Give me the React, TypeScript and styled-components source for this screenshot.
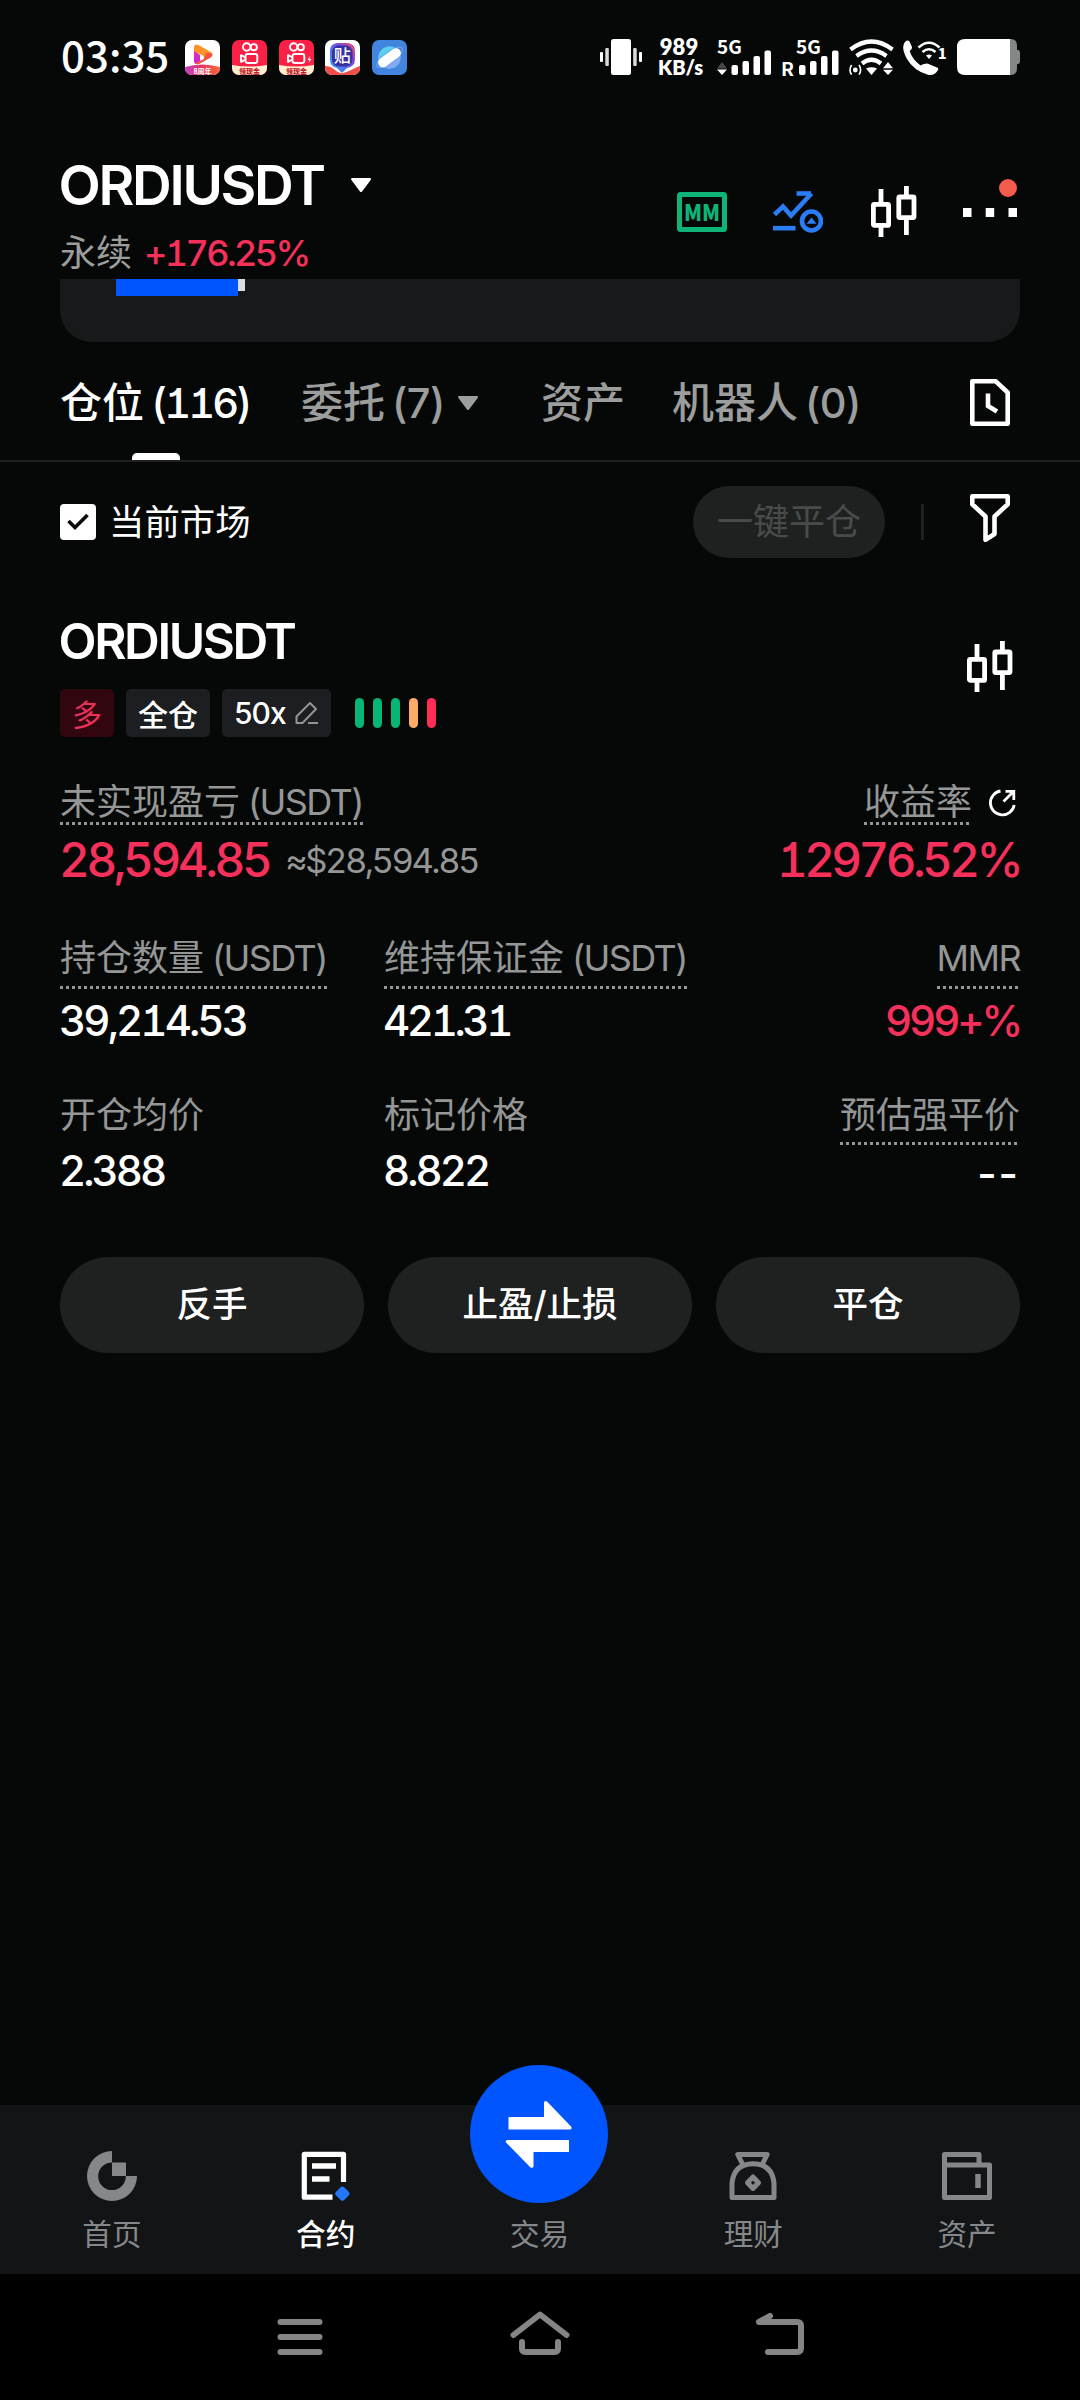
import React from "react";
import styled, { createGlobalStyle } from "styled-components";

const C = {
  bg: "#060807",
  panel: "#18191a",
  pill: "#1f2120",
  line: "#1f2020",
  white: "#ffffff",
  grey: "#959797",
  tab: "#9c9e9e",
  nav: "#131415",
  navText: "#85888a",
  red: "#f5305a",
  green: "#06b676",
  blue: "#0055ff",
};

const GlobalStyle = createGlobalStyle`
  * { box-sizing: border-box; }
  body { margin: 0; background: ${C.bg}; }
  svg { display: block; flex: none; }
`;

const Screen = styled.div`
  width: 1080px;
  height: 2400px;
  display: flex;
  flex-direction: column;
  overflow: hidden;
  background: ${C.bg};
  color: ${C.white};
  font-family: Inter, "Noto Sans CJK SC", sans-serif;
  font-feature-settings: "cv01";
  white-space: nowrap;
`;

const Latin = styled.span<{ $track?: number; $tabular?: boolean }>`
  letter-spacing: ${(p) => p.$track ?? -1}px;
  font-feature-settings: ${(p) => (p.$tabular ? '"cv01", "tnum"' : '"cv01"')};
`;

/* ---------- status bar ---------- */

const StatusBar = styled.header`
  height: 114px;
  padding: 0 60px 0 61px;
  display: flex;
  align-items: center;
`;

const Clock = styled.div`
  width: 124px;
  padding-bottom: 6px;
  font: 500 42px/44px "Noto Sans CJK SC", sans-serif;
`;

const AppIcons = styled.div`
  display: flex;
  gap: 11.8px;
`;

const StatusRight = styled.div`
  margin-left: auto;
  height: 36px;
  display: flex;
  align-items: stretch;
`;

const NetSpeed = styled.div`
  width: 42px;
  margin: 0 17px 0 16px;
  display: flex;
  flex-direction: column;
  text-align: center;
  font: 800 22px/16px Lato, sans-serif;
  & > small {
    font-size: 20px;
    line-height: 25px;
  }
`;

const Signal = styled.div<{ $width: number }>`
  position: relative;
  width: ${(p) => p.$width}px;
`;

const SignalLabel = styled.span<{ $x: number; $y: number; $size: number }>`
  position: absolute;
  left: ${(p) => p.$x}px;
  top: ${(p) => p.$y}px;
  font: 700 ${(p) => p.$size}px/18px "Noto Sans CJK SC", sans-serif;
`;

const StatusGap = styled.div<{ $w: number }>`
  width: ${(p) => p.$w}px;
`;

/* ---------- header ---------- */

const Header = styled.div`
  height: 165px;
  padding: 41px 60px 0;
  display: flex;
  justify-content: space-between;
`;

const PairName = styled.h1<{ $size: number; $track: number }>`
  margin: 0 0 0 -1.5px;
  font-size: ${(p) => p.$size}px;
  line-height: 60px;
  font-weight: 600;
  letter-spacing: ${(p) => p.$track}px;
`;

const PairRow = styled.div`
  display: flex;
  align-items: center;
  gap: 27px;
`;

const PairSub = styled.div`
  margin-top: 16px;
  display: flex;
  gap: 12px;
  font-size: 36px;
  line-height: 44px;
  color: ${C.tab};
`;

const Change = styled(Latin)`
  color: ${C.red};
  font-weight: 500;
`;

const HeaderIcons = styled.div`
  height: 60px;
  margin-top: 27px;
  display: flex;
  gap: 36px;
`;

const IconBox = styled.div`
  position: relative;
  width: 60px;
  height: 60px;
  display: flex;
  align-items: center;
  justify-content: center;
`;

const Badge = styled.i`
  position: absolute;
  right: 3px;
  top: -3px;
  width: 18px;
  height: 18px;
  border-radius: 50%;
  background: #f55b4c;
`;

const ScrolledPanel = styled.div`
  height: 63px;
  margin: 0 60px;
  padding-left: 56px;
  display: flex;
  background: ${C.panel};
  border-radius: 0 0 32px 32px;
`;

const SliderFill = styled.div`
  width: 122px;
  height: 17px;
  background: ${C.blue};
`;

const SliderThumb = styled.div`
  width: 7px;
  height: 12px;
  background: #dcdfe2;
`;

/* ---------- tabs ---------- */

const Tabs = styled.nav`
  height: 120px;
  padding: 0 60px;
  display: flex;
  border-bottom: 2px solid ${C.line};
`;

const Tab = styled.div<{ $active?: boolean; $width: number }>`
  position: relative;
  width: ${(p) => p.$width}px;
  padding-top: 36px;
  display: flex;
  font-size: 42px;
  line-height: 50px;
  font-weight: 500;
  color: ${(p) => (p.$active ? C.white : C.tab)};
  &::after {
    content: "";
    display: ${(p) => (p.$active ? "block" : "none")};
    position: absolute;
    left: 71.5px;
    bottom: 0;
    width: 48px;
    height: 7px;
    border-radius: 5px 5px 0 0;
    background: ${C.white};
  }
  & svg {
    margin: 18px 0 0 13px;
  }
`;

const Count = styled(Latin)`
  margin-left: 7px;
  font-size: 41.5px;
`;

const TabIcon = styled(IconBox)`
  margin: 30px 0 0 auto;
`;

/* ---------- toolbar ---------- */

const Toolbar = styled.div`
  height: 120px;
  padding: 0 60px;
  display: flex;
  align-items: center;
`;

const Checkbox = styled.div`
  width: 36px;
  height: 36px;
  margin-right: 13px;
  display: flex;
  align-items: center;
  justify-content: center;
  border-radius: 4px;
  background: ${C.white};
`;

const CheckLabel = styled.span`
  padding-top: 1px;
  font-size: 35.4px;
  line-height: 44px;
`;

const CloseAll = styled.button`
  width: 192px;
  height: 72px;
  margin: 0 36px 0 auto;
  padding: 0;
  border: 0;
  border-radius: 36px;
  background: ${C.pill};
  color: #494b4b;
  font: 400 36px/44px Inter, "Noto Sans CJK SC", sans-serif;
`;

const Divider = styled.i`
  width: 3px;
  height: 36px;
  margin-right: 36px;
  background: ${C.line};
`;

const FilterBox = styled(IconBox)`
  padding-bottom: 9px;
`;

/* ---------- position card ---------- */

const Card = styled.section`
  padding: 29px 60px 0;
`;

const CardHead = styled.div`
  display: flex;
  justify-content: space-between;
  align-items: center;
`;

const CardIcon = styled(IconBox)`
  margin-bottom: 15px;
`;

const Tags = styled.div`
  margin-top: 18px;
  height: 48px;
  display: flex;
  align-items: center;
`;

const Tag = styled.span<{ $long?: boolean }>`
  height: 48px;
  margin-right: 12px;
  padding: 0 12px;
  display: flex;
  align-items: center;
  gap: 9px;
  border-radius: 5px;
  font-size: 30px;
  font-weight: ${(p) => (p.$long ? 400 : 500)};
  background: ${(p) => (p.$long ? "#31060f" : "#1d1e22")};
  color: ${(p) => (p.$long ? "#e8325a" : C.white)};
`;

const RiskBars = styled.div`
  display: flex;
  gap: 9px;
  margin-left: 12px;
`;

const RiskBar = styled.i<{ $color: string }>`
  width: 9px;
  height: 30px;
  border-radius: 4.5px;
  background: ${(p) => p.$color};
`;

const PnlRow = styled.div`
  margin-top: 44px;
  display: flex;
  justify-content: space-between;
`;

const Grid = styled.div`
  margin-top: 52px;
  display: grid;
  grid-template-columns: 324px 324px 1fr;
  row-gap: 48px;
`;

const Metric = styled.div<{ $right?: boolean }>`
  display: flex;
  flex-direction: column;
  align-items: ${(p) => (p.$right ? "flex-end" : "flex-start")};
`;

const Label = styled.div<{ $gap?: number; $plain?: boolean }>`
  display: flex;
  padding-bottom: ${(p) => (p.$plain ? 0 : 2 + (p.$gap ?? 8))}px;
  font-size: 36px;
  line-height: 42px;
  color: ${C.grey};
  background: ${(p) =>
    p.$plain ? "none" : `repeating-linear-gradient(90deg, ${C.grey} 0 3px, transparent 3px 6px) bottom left / 100% 3px no-repeat`};
`;

const LabelRow = styled.div`
  display: flex;
  gap: 16px;
  padding-right: 4px;
`;

const ShareBox = styled.div`
  padding-top: 8px;
`;

const Unit = styled(Latin)`
  margin-left: 8px;
`;

const BigValue = styled.div`
  margin: 10px 0 0 -1px;
  display: flex;
  align-items: center;
  gap: 16px;
  font-size: 47.5px;
  line-height: 50px;
  font-weight: 500;
  color: ${C.red};
`;

const Approx = styled(Latin)`
  font-size: 34.6px;
  font-weight: 400;
  color: ${C.grey};
`;

const Value = styled(Latin)<{ $red?: boolean; $top?: number }>`
  margin: ${(p) => p.$top ?? 7}px 0 0 -1px;
  font-size: 42px;
  line-height: 50px;
  font-weight: 500;
  color: ${(p) => (p.$red ? C.red : C.white)};
`;

const Actions = styled.div`
  margin-top: 58px;
  display: grid;
  grid-template-columns: repeat(3, 1fr);
  gap: 24px;
`;

const Action = styled.button`
  height: 96px;
  padding: 0;
  border: 0;
  border-radius: 48px;
  background: ${C.pill};
  color: ${C.white};
  font: 500 35.5px/44px Inter, "Noto Sans CJK SC", sans-serif;
`;

/* ---------- bottom ---------- */

const BottomNav = styled.nav`
  height: 169px;
  margin-top: auto;
  padding: 0 6px 0 5px;
  display: grid;
  grid-template-columns: repeat(5, 1fr);
  background: ${C.nav};
`;

const NavItem = styled.div<{ $active?: boolean }>`
  position: relative;
  padding-top: 45px;
  display: flex;
  flex-direction: column;
  align-items: center;
  color: ${(p) => (p.$active ? C.white : C.navText)};
`;

const NavIcon = styled.div`
  height: 52px;
  display: flex;
  align-items: center;
`;

const NavLabel = styled.span<{ $active?: boolean }>`
  margin-top: 14px;
  font-size: 29.6px;
  line-height: 36px;
  font-weight: ${(p) => (p.$active ? 500 : 400)};
`;

const TradeButton = styled.div`
  position: absolute;
  top: -40px;
  left: 37.4px;
  width: 138px;
  height: 138px;
  border-radius: 50%;
  background: ${C.blue};
`;

const SystemNav = styled.footer`
  height: 126px;
  padding: 0 270px;
  display: flex;
  justify-content: space-between;
  background: #000;
`;

/* ---------- drawings ---------- */

const Caret = ({ w, h }: { w: number; h: number }) => (
  <svg width={w} height={h} viewBox="0 0 20 14" fill="currentColor">
    <path d="M1.500 0h17.2c1.2 0 1.700 1 1 1.900L11.200 13.300a1.500 1.500 0 0 1-2.400 0L.4 1.900C-.4 1 .2 0 1.500 0Z" />
  </svg>
);

const Candles = () => (
  <svg width="46" height="52" viewBox="0 0 46 52" fill="none" stroke="#fff" strokeWidth="4.800">
    <rect x="2.400" y="18.400" width="15.200" height="21" rx="1" />
    <path d="M10 3v14M10 40v11" />
    <rect x="27.800" y="11" width="15.200" height="20.600" rx="1" />
    <path d="M35.400 0v10M35.400 33v16" />
  </svg>
);

const VideoApp = () => (
  <svg width="35" height="35" viewBox="0 0 35 35">
    <defs>
      <clipPath id="va"><rect width="35" height="35" rx="7" /></clipPath>
      <linearGradient id="vg" x1="0" y1="1" x2="0" y2="0">
        <stop offset="0" stopColor="#c31bf0" /><stop offset="1" stopColor="#f0349a" />
      </linearGradient>
      <linearGradient id="vb" x1="0" x2="1">
        <stop offset="0" stopColor="#c440c8" /><stop offset=".5" stopColor="#e8365c" /><stop offset="1" stopColor="#ff6a3a" />
      </linearGradient>
    </defs>
    <g clipPath="url(#va)">
      <rect width="35" height="35" fill="#fff" />
      <path d="M9 10l6 5v8l-3 1q-3 0-3-3Z" fill="url(#vg)" />
      <path d="M9 8q0-5 4.500-3L25 11.500q4 3 0 6L17 21q4-4 0-6L9 11Z" fill="#ff9426" />
      <path d="M27 13q1.500 3-2 5l-11 6q-3 1-4-1l9-4 2-6Z" fill="#f2543f" />
      <path d="M0 27q17-5 35 0v8H0Z" fill="url(#vb)" />
      <text x="17.500" y="33.500" textAnchor="middle" fontSize="7" fontWeight="700" fill="#fff" fontFamily="Noto Sans CJK SC">8周年</text>
    </g>
  </svg>
);

const KuaiApp = ({ id, bolt }: { id: string; bolt?: boolean }) => (
  <svg width="35" height="35" viewBox="0 0 35 35">
    <defs><clipPath id={id}><rect width="35" height="35" rx="7" /></clipPath></defs>
    <g clipPath={`url(#${id})`}>
      <rect width="35" height="35" fill="#fb2146" />
      <path d="M0 25q17 3 35 0v10H0Z" fill="#ffeed0" />
      <g fill="none" stroke="#fff" strokeWidth="1.900">
        <circle cx="14.700" cy="7" r="3.700" />
        <circle cx="21.800" cy="7.200" r="3.100" />
        <rect x="13.500" y="14" width="11.800" height="9" rx="2.200" />
        <path d="M13.500 17.500L9 15.200v6.600l4.500-2.100" strokeLinejoin="round" />
      </g>
      {bolt && <path d="M31 16l-2.500 4h2L29.500 23l3-4h-2Z" fill="#fff" />}
      <text x="17.500" y="33.600" textAnchor="middle" fontSize="7" fontWeight="900" fill="#c4202c" fontFamily="Noto Sans CJK SC">领现金</text>
    </g>
  </svg>
);

const TiebaApp = () => (
  <svg width="35" height="35" viewBox="0 0 35 35">
    <defs>
      <clipPath id="ta"><rect width="35" height="35" rx="7" /></clipPath>
      <linearGradient id="tg" x1="1" y1="0" x2="0" y2="1">
        <stop offset="0" stopColor="#ff4a5f" /><stop offset=".35" stopColor="#7b4be0" /><stop offset="1" stopColor="#2aa7ff" />
      </linearGradient>
    </defs>
    <g clipPath="url(#ta)">
      <rect width="35" height="35" fill="#fff" />
      <path d="M0 26q6 0 10 4t8 3 8-3 9-4v9H0Z" fill="#ee5048" />
      <path d="M12 3h11q7 1 7 8v8q0 8-8 9l-5 5-5-5q-7-1-7-9v-8q0-7 7-8Z" fill="url(#tg)" />
      <rect x="7" y="5.500" width="20.500" height="21" rx="7" fill="#37309e" />
      <text x="17.300" y="22.300" textAnchor="middle" fontSize="17" fontWeight="500" fill="#fff" fontFamily="Noto Sans CJK SC">贴</text>
    </g>
  </svg>
);

const PlanetApp = () => (
  <svg width="35" height="35" viewBox="0 0 35 35">
    <rect width="35" height="35" rx="7" fill="#4285df" />
    <circle cx="17.500" cy="17.700" r="11.200" fill="#82aaf0" />
    <path d="M6.500 19A11.200 11.200 0 0 1 26 10.500Z" fill="#58d0ee" />
    <ellipse cx="17.500" cy="17.500" rx="15.500" ry="5.500" fill="none" stroke="#6fa3ec" strokeWidth="1" transform="rotate(-36 17.500 17.500)" />
    <rect x="4.500" y="13" width="26" height="9.600" rx="4.800" fill="#fff" transform="rotate(-36 17.500 17.800)" />
  </svg>
);

const Vibrate = () => (
  <svg width="42" height="36" viewBox="0 0 42 36" fill="#fff">
    <rect x="11" width="20" height="36" rx="2.500" />
    <rect x="5.300" y="9" width="3.500" height="18" rx="1" opacity=".85" />
    <rect x="33.200" y="9" width="3.500" height="18" rx="1" opacity=".85" />
    <rect x="0" y="13" width="3" height="10" rx="1" />
    <rect x="39" y="13" width="3" height="10" rx="1" />
  </svg>
);

const Bars = ({ x, arrows }: { x: number; arrows?: boolean }) => (
  <svg width="57" height="36" viewBox="0 0 57 36" fill="#fff">
    {arrows && <path d="M0 29.500L5 23l5 6.500Z" fill="#484a4a" />}
    {arrows && <path d="M0 30.500h10L5 36Z" />}
    <rect x={x} y="26" width="6.500" height="10" rx="2" />
    <rect x={x + 11} y="22" width="6.500" height="14" rx="2" />
    <rect x={x + 22} y="17" width="6.500" height="19" rx="2" />
    <rect x={x + 33} y="11.500" width="6.500" height="24.500" rx="2" />
  </svg>
);

const Wifi = () => (
  <svg width="45" height="36" viewBox="0 0 45 36" fill="none" stroke="#fff" strokeWidth="4.200" strokeLinecap="butt">
    <path d="M1.500 10.500Q22.500-5.500 43.500 10.500" />
    <path d="M7.500 17Q22.500 6 37.500 17" />
    <path d="M13 24.500Q22.500 17 32 24.500" />
    <path d="M17 29.500q5.500-2.500 11 0L22.500 36Z" fill="#fff" stroke="none" />
    <path d="M34 29.200L39 23l5 6.200ZM34 30.800h10L39 36Z" fill="#fff" stroke="none" />
    <circle cx="6.300" cy="31" r="2.400" fill="#fff" stroke="none" />
    <path d="M2.600 26q-3.200 5 0 9.600M10 26q3.200 5 0 9.600" strokeWidth="1.600" />
  </svg>
);

const WifiCall = () => (
  <svg width="46" height="36" viewBox="0 0 46 36" fill="none" stroke="#fff">
    <path d="M2 3Q4.500.5 6.500 2.500L9 8q.5 2-2.300 4Q9 20 17.500 26.500 20 25 22.500 24.800q1.500-.5 2.500 0l9.500 4q1.500 1 0 3-3 5-9.500 4Q11 32 4 20-2.500 8 2 3Z" fill="#fff" stroke="none" />
    <path d="M15.500 8.500q10.500-9.500 21 0" strokeWidth="2.600" />
    <path d="M19.500 13q6.500-5.500 13 0" strokeWidth="2.600" />
    <path d="M23 16.500q3-2 6 0L26 20Z" fill="#fff" stroke="none" />
    <text x="35" y="20" fontSize="14" fontWeight="800" fill="#fff" stroke="none" fontFamily="Noto Sans CJK SC">1</text>
  </svg>
);

const Battery = () => (
  <svg width="63" height="36" viewBox="0 0 63 36">
    <path d="M50 0h4q6 0 6 7v4h1q2 0 2 3v8q0 3-2 3h-1v4q0 7-6 7h-4Z" fill="#858686" />
    <path d="M8 0h45v36H8q-8 0-8-8V8q0-8 8-8Z" fill="#fff" />
  </svg>
);

const MarginMode = () => (
  <svg width="50" height="40" viewBox="0 0 50 40">
    <rect x="2.500" y="2.500" width="45" height="35" rx="1" fill="none" stroke="#0fb479" strokeWidth="5" />
    <text x="25" y="28.500" textAnchor="middle" fontSize="23" fontWeight="800" textLength="36" lengthAdjust="spacingAndGlyphs" fill="#0fb479" fontFamily="Noto Sans CJK SC">MM</text>
  </svg>
);

const Trend = () => (
  <svg width="50" height="42" viewBox="0 0 50 42" fill="none" stroke="#2b7df5" strokeWidth="4.600">
    <path d="M1.500 23.500L10 15.500l8 9L38.500 2.500" />
    <path d="M23.500 2.500H38" />
    <path d="M0 37.200h22.500" />
    <circle cx="38.500" cy="30" r="9.500" />
    <path d="M33.500 32.800L38.500 26.500l5 6.300Z" fill="#2b7df5" stroke="none" />
  </svg>
);

const More = () => (
  <svg width="54" height="9" viewBox="0 0 54 9" fill="#fff">
    <rect width="8.500" height="9" /><rect x="22.700" width="8.500" height="9" /><rect x="45.500" width="8.500" height="9" />
  </svg>
);

const History = () => (
  <svg width="40" height="47" viewBox="0 0 40 47" fill="none" stroke="#fff" strokeWidth="4.600" strokeLinejoin="round">
    <path d="M2.300 2.300h23.500L37.700 13.500v31.200H2.300Z" />
    <path d="M18 14.500v12.500l9 5.500" strokeLinejoin="miter" />
  </svg>
);

const Filter = () => (
  <svg width="40" height="48" viewBox="0 0 40 48" fill="none" stroke="#fff" strokeWidth="4.600" strokeLinejoin="round">
    <path d="M2.300 2.300h35.400v8L24.500 22.500v17.500L15.500 45.700V22.500L2.300 10.300Z" />
  </svg>
);

const Pencil = () => (
  <svg width="24" height="24" viewBox="0 0 24 24" fill="none" stroke="#929496" strokeWidth="2">
    <path d="M1.500 22V15.500L15 2l6 6L7.500 22Z" strokeLinejoin="round" /><path d="M13 22h10" />
  </svg>
);

const Share = () => (
  <svg width="28" height="28" viewBox="0 0 28 28" fill="none" stroke="#fff" strokeWidth="2.800">
    <path d="M12.500 2A12 12 0 1 0 26.200 16" />
    <path d="M15.500 12.500L25 3M17.500 2.400h8.300v8.600" />
  </svg>
);

const HomeGlyph = () => (
  <svg width="50" height="50" viewBox="0 0 50 50" fill="#85888a">
    <path d="M25 0v11.500A13.800 13.800 0 1 0 38.800 25H50A25 25 0 1 1 25 0Z" />
    <rect x="25" y="11.500" width="14" height="13.500" />
  </svg>
);

const ContractGlyph = () => (
  <svg width="50" height="50" viewBox="0 0 50 50" fill="none" stroke="#fff" strokeWidth="5.200" strokeLinejoin="round">
    <path d="M42.500 31V3.300H3.300v42.900H31.500" />
    <path d="M11 15h24M11 28h17.500" strokeWidth="5.500" />
    <rect x="35.800" y="37" width="11.400" height="11.400" rx="2.500" fill="#2477f8" stroke="none" transform="rotate(45 41.500 42.500)" />
  </svg>
);

const EarnGlyph = () => (
  <svg width="48" height="50" viewBox="0 0 48 50" fill="none" stroke="#85888a" strokeWidth="5" strokeLinejoin="round">
    <path d="M14 14L8.800 3.500h29.400L33 14" />
    <path d="M3 46.500V32Q5 13 24 12.800 43 13 45 32V46.500Z" />
    <path d="M24 26l5.500 5.700-5.500 5.700-5.500-5.700Z" />
  </svg>
);

const WalletGlyph = () => (
  <svg width="50" height="50" viewBox="0 0 50 50" fill="none" stroke="#85888a" strokeWidth="5" strokeLinejoin="round">
    <path d="M2.500 14h45v32.500h-45ZM2.500 14V3.500h34.500V14" />
    <path d="M36 23v14" strokeWidth="5.500" />
  </svg>
);

const Swap = () => (
  <svg width="138" height="138" viewBox="0 0 138 138" fill="#fff">
    <path d="M38.500 52H74V37.500q.5-2.500 3-1L101.500 62q.5 2-1 2.500h-62Z" />
    <path d="M99 75H37q-2 1-1 2.500L60.500 102.500q2.500 1 3-1V87H99Z" />
  </svg>
);

const SysIcon = ({ d }: { d: string }) => (
  <svg width="60" height="126" viewBox="0 0 60 126" fill="none" stroke="#858585" strokeWidth="6" strokeLinecap="round" strokeLinejoin="round">
    <path d={d} />
  </svg>
);

/* ---------- data ---------- */

const risk = [C.green, C.green, C.green, "#ffab66", "#ff2c58"];
const actions = ["反手", "止盈/止损", "平仓"];

export default function App() {
  return (
    <Screen>
      <GlobalStyle />
      <StatusBar>
        <Clock>03:35</Clock>
        <AppIcons>
          <VideoApp />
          <KuaiApp id="k1" />
          <KuaiApp id="k2" bolt />
          <TiebaApp />
          <PlanetApp />
        </AppIcons>
        <StatusRight>
          <Vibrate />
          <NetSpeed>
            989<small>KB/s</small>
          </NetSpeed>
          <Signal $width={65}>
            <SignalLabel $x={0} $y={-2} $size={19}>5G</SignalLabel>
            <Bars x={14.5} arrows />
          </Signal>
          <Signal $width={67}>
            <SignalLabel $x={14} $y={-2} $size={19}>5G</SignalLabel>
            <SignalLabel $x={-1} $y={20} $size={19}>R</SignalLabel>
            <Bars x={17} />
          </Signal>
          <Wifi />
          <StatusGap $w={9} />
          <WifiCall />
          <StatusGap $w={8} />
          <Battery />
        </StatusRight>
      </StatusBar>

      <Header>
        <div>
          <PairRow>
            <PairName $size={55} $track={-2.3}>ORDIUSDT</PairName>
            <Caret w={20} h={14} />
          </PairRow>
          <PairSub>
            永续<Change $tabular $track={-2.6}>+176.25%</Change>
          </PairSub>
        </div>
        <HeaderIcons>
          <IconBox><MarginMode /></IconBox>
          <IconBox><Trend /></IconBox>
          <IconBox><Candles /></IconBox>
          <IconBox><More /><Badge /></IconBox>
        </HeaderIcons>
      </Header>

      <ScrolledPanel>
        <SliderFill />
        <SliderThumb />
      </ScrolledPanel>

      <Tabs>
        <Tab $active $width={241}>仓位<Count $tabular $track={-2.9}>(116)</Count></Tab>
        <Tab $width={240}>委托<Count $track={-0.5}>(7)</Count><Caret w={20} h={14} /></Tab>
        <Tab $width={131}>资产</Tab>
        <Tab $width={200}>机器人<Count $track={-0.5}>(0)</Count></Tab>
        <TabIcon><History /></TabIcon>
      </Tabs>

      <Toolbar>
        <Checkbox>
          <svg width="22" height="18" viewBox="0 0 22 18" fill="none" stroke="#0b0b0b" strokeWidth="3.600">
            <path d="M1.500 8L8 14.500 20.500 2" />
          </svg>
        </Checkbox>
        <CheckLabel>当前市场</CheckLabel>
        <CloseAll>一键平仓</CloseAll>
        <Divider />
        <FilterBox><Filter /></FilterBox>
      </Toolbar>

      <Card>
        <CardHead>
          <div>
            <PairName $size={49.5} $track={-2.4}>ORDIUSDT</PairName>
            <Tags>
              <Tag $long>多</Tag>
              <Tag>全仓</Tag>
              <Tag><Latin $track={-1}>50x</Latin><Pencil /></Tag>
              <RiskBars>
                {risk.map((c, i) => <RiskBar key={i} $color={c} />)}
              </RiskBars>
            </Tags>
          </div>
          <CardIcon><Candles /></CardIcon>
        </CardHead>

        <PnlRow>
          <Metric>
            <Label $gap={0}>未实现盈亏<Unit $track={-1.6}>(USDT)</Unit></Label>
            <BigValue>
              <Latin $tabular $track={-3.4}>28,594.85</Latin>
              <Approx $tabular $track={-2.5}>≈$28,594.85</Approx>
            </BigValue>
          </Metric>
          <Metric $right>
            <LabelRow>
              <Label $gap={0}>收益率</Label>
              <ShareBox><Share /></ShareBox>
            </LabelRow>
            <BigValue><Latin $tabular $track={-3.6}>12976.52%</Latin></BigValue>
          </Metric>
        </PnlRow>

        <Grid>
          <Metric>
            <Label>持仓数量<Unit $track={-1.6}>(USDT)</Unit></Label>
            <Value $tabular $track={-2.9}>39,214.53</Value>
          </Metric>
          <Metric>
            <Label>维持保证金<Unit $track={-1.6}>(USDT)</Unit></Label>
            <Value $tabular $track={-3.4}>421.31</Value>
          </Metric>
          <Metric $right>
            <Label><Latin $track={-1.6}>MMR</Latin></Label>
            <Value $tabular $red $track={-3.1}>999+%</Value>
          </Metric>
          <Metric>
            <Label $plain>开仓均价</Label>
            <Value $tabular $top={10} $track={-3}>2.388</Value>
          </Metric>
          <Metric>
            <Label $plain>标记价格</Label>
            <Value $tabular $top={10} $track={-3}>8.822</Value>
          </Metric>
          <Metric $right>
            <Label $gap={7}>预估强平价</Label>
            <Value $top={4} $track={2}>--</Value>
          </Metric>
        </Grid>

        <Actions>
          {actions.map((a) => <Action key={a}>{a}</Action>)}
        </Actions>
      </Card>

      <BottomNav>
        <NavItem><NavIcon><HomeGlyph /></NavIcon><NavLabel>首页</NavLabel></NavItem>
        <NavItem $active><NavIcon><ContractGlyph /></NavIcon><NavLabel $active>合约</NavLabel></NavItem>
        <NavItem><TradeButton><Swap /></TradeButton><NavIcon /><NavLabel>交易</NavLabel></NavItem>
        <NavItem><NavIcon><EarnGlyph /></NavIcon><NavLabel>理财</NavLabel></NavItem>
        <NavItem><NavIcon><WalletGlyph /></NavIcon><NavLabel>资产</NavLabel></NavItem>
      </BottomNav>

      <SystemNav>
        <SysIcon d="M10.500 48h39M10.500 63h39M10.500 78h39" />
        <SysIcon d="M3.500 61L30 40.500 56.500 61M12 68v6.500q0 3.500 3.500 3.500h29q3.500 0 3.500-3.500V68" />
        <SysIcon d="M20 42L9 48h38q4 0 4 4v22q0 4-4 4H18" />
      </SystemNav>
    </Screen>
  );
}
